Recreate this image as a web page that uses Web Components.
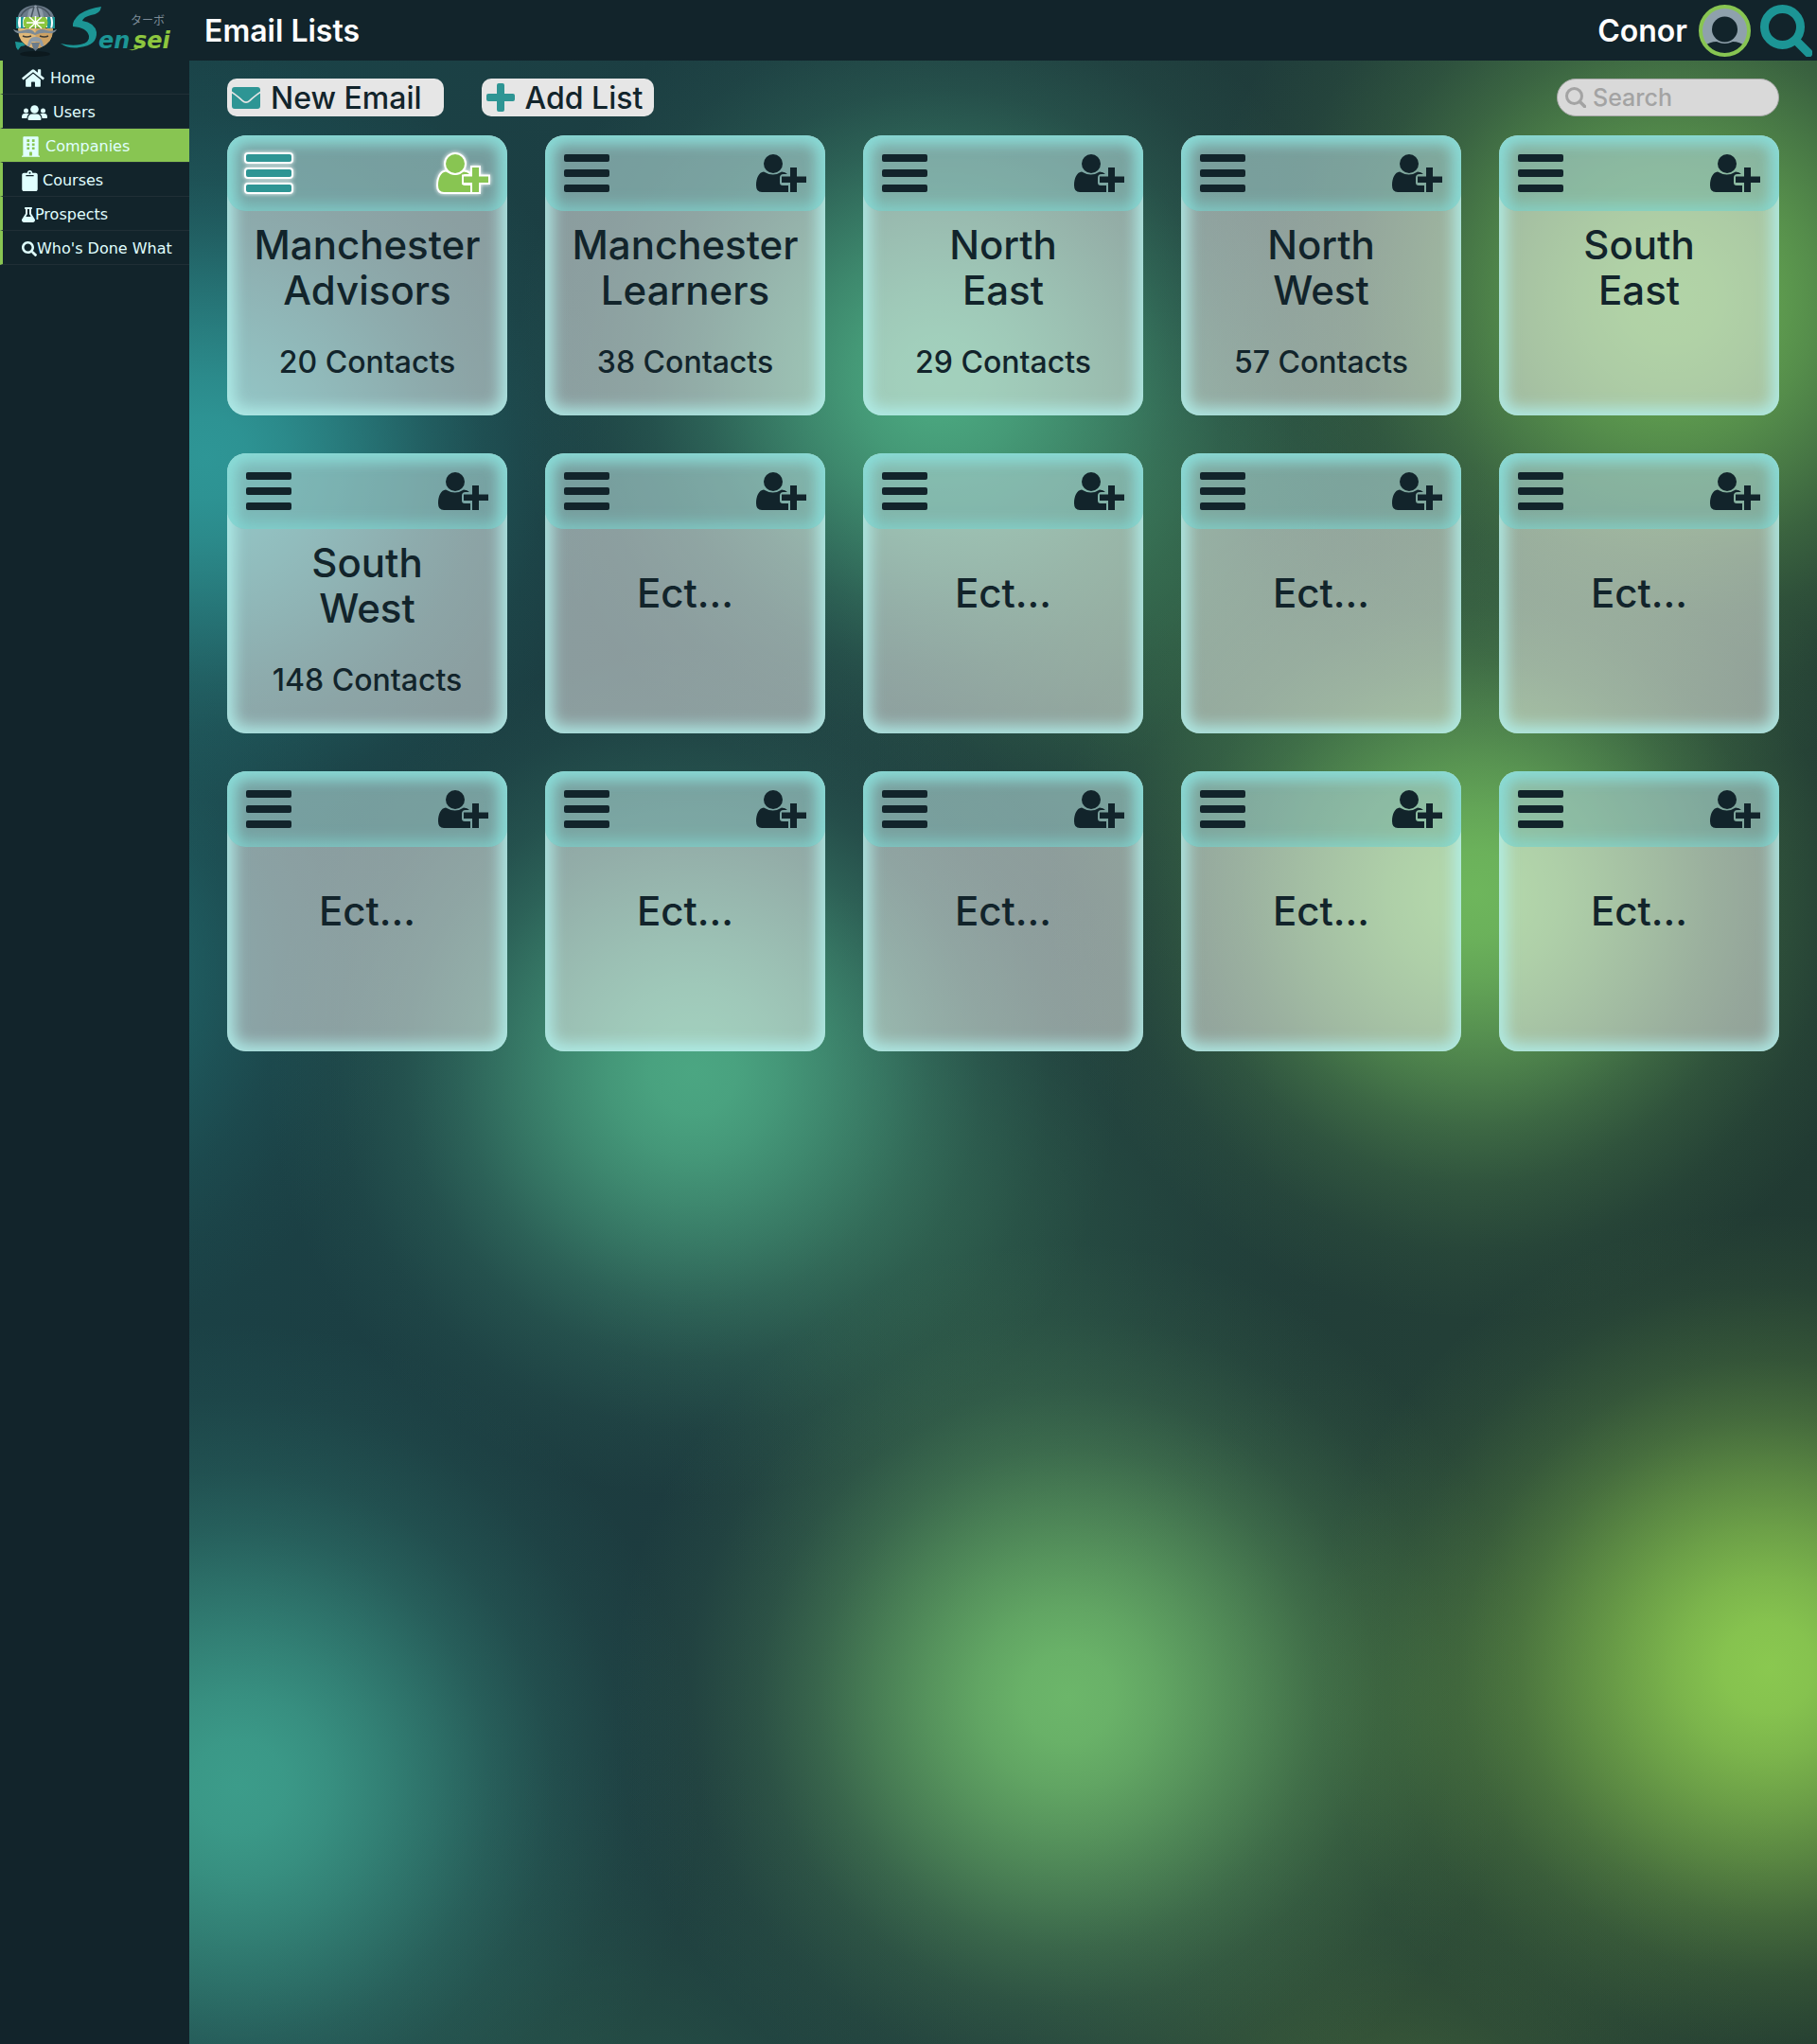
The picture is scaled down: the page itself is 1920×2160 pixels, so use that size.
<!DOCTYPE html>
<html lang="en">
<head>
<meta charset="utf-8">
<meta name="viewport" content="width=device-width, initial-scale=1">
<title>Email Lists</title>
<style>
  :root {
    --ink: #12242b;
    --teal: #2e9594;
    --green: #88c552;
    --display: Inter, "Open Sans", sans-serif;
    --ui: "DejaVu Sans", sans-serif;
  }
  html, body { margin: 0; min-height: 100%; background: var(--ink); }
</style>
</head>
<body>
<app-shell>
  <app-header slot="header" heading="Email Lists" user="Conor"></app-header>
  <side-nav slot="nav">
    <nav-item icon="home" gap="6">Home</nav-item>
    <nav-item icon="users" gap="6">Users</nav-item>
    <nav-item icon="building" gap="6" active>Companies</nav-item>
    <nav-item icon="clipboard" gap="5">Courses</nav-item>
    <nav-item icon="flask" gap="0">Prospects</nav-item>
    <nav-item icon="search" gap="0">Who's Done What</nav-item>
  </side-nav>
  <tool-bar>
    <tool-button icon="mail" wide>New Email</tool-button>
    <tool-button icon="plus">Add List</tool-button>
    <search-box slot="end" label="Search"></search-box>
  </tool-bar>
  <card-grid>
    <list-card contacts="20" highlighted>Manchester<br>Advisors</list-card>
    <list-card contacts="38">Manchester<br>Learners</list-card>
    <list-card contacts="29">North<br>East</list-card>
    <list-card contacts="57">North<br>West</list-card>
    <list-card>South<br>East</list-card>
    <list-card contacts="148">South<br>West</list-card>
    <list-card>Ect...</list-card>
    <list-card>Ect...</list-card>
    <list-card>Ect...</list-card>
    <list-card>Ect...</list-card>
    <list-card>Ect...</list-card>
    <list-card>Ect...</list-card>
    <list-card>Ect...</list-card>
    <list-card>Ect...</list-card>
    <list-card>Ect...</list-card>
  </card-grid>
</app-shell>

<script>
const svg = (w, h, box, body) =>
  `<svg width="${w}" height="${h}" viewBox="${box}" aria-hidden="true">${body}</svg>`;

const ICONS = {
  home: svg(24, 21, '0 0 576 512', '<path d="M280.37 148.26L96 300.11V464a16 16 0 0 0 16 16l112.06-.29a16 16 0 0 0 15.92-16V368a16 16 0 0 1 16-16h64a16 16 0 0 1 16 16v95.64a16 16 0 0 0 16 16.05L464 480a16 16 0 0 0 16-16V300L295.67 148.26a12.19 12.19 0 0 0-15.3 0zM571.6 251.47L488 182.56V44.05a12 12 0 0 0-12-12h-56a12 12 0 0 0-12 12v72.61L318.47 43a48 48 0 0 0-61 0L4.34 251.47a12 12 0 0 0-1.6 16.9l25.5 31A12 12 0 0 0 45.15 301l235.22-193.74a12.19 12.19 0 0 1 15.3 0L530.9 301a12 12 0 0 0 16.9-1.6l25.5-31a12 12 0 0 0-1.7-16.93z"/>'),
  users: svg(27, 16, '0 0 27 16', '<circle cx="13.500" cy="4.500" r="4.300"/><circle cx="4.500" cy="6" r="2.500"/><circle cx="22.500" cy="6" r="2.500"/><path d="M6.500 14.500c0-3 2-5 4.500-5h5c2.500 0 4.500 2 4.500 5 0 1-.5 1.500-1.500 1.500H8c-1 0-1.500-.5-1.500-1.500zM0 13c0-2.500 1-4 3-4h3c.8 0 1.300.2 1.800.6C6.300 10.500 5.600 12 5.500 14H1c-.6 0-1-.4-1-1zM27 13c0-2.500-1-4-3-4h-3c-.8 0-1.300.2-1.800.6 1.500.9 2.200 2.400 2.300 4.400H26c.6 0 1-.4 1-1z"/>'),
  building: svg(19, 22, '0 0 448 512', '<path fill-rule="evenodd" d="M436 480h-20V24c0-13-11-24-24-24H56C43 0 32 11 32 24v456H12c-7 0-12 5-12 12v20h448v-20c0-7-5-12-12-12zM128 76h64v60h-64zM256 76h64v60h-64zM128 172h64v60h-64zM256 172h64v60h-64zM128 268h64v60h-64zM256 268h64v60h-64zM190 480v-84c0-7 5-12 12-12h44c7 0 12 5 12 12v84z"/>'),
  clipboard: svg(17, 22, '0 0 384 512', '<path fill-rule="evenodd" d="M336 64h-80c0-35-29-64-64-64s-64 29-64 64H48C21 64 0 85 0 112v352c0 27 21 48 48 48h288c27 0 48-21 48-48V112c0-27-21-48-48-48zM192 40a24 24 0 1 1 0 48 24 24 0 0 1 0-48zM96 118h192v26H96z"/>'),
  flask: svg(14, 16, '0 0 448 512', '<path fill-rule="evenodd" d="M437.2 403.500L320 215V64h8c13.300 0 24-10.700 24-24V24c0-13.300-10.700-24-24-24H120c-13.300 0-24 10.700-24 24v16c0 13.300 10.700 24 24 24h8v151L10.800 403.500C-18.500 450.600 15.300 512 70.900 512h306.200c55.700 0 89.400-61.500 60.100-108.500zM137.900 320l48.200-77.600c3.700-5.200 5.800-11.600 5.800-18.400V64h64v160c0 6.900 2.200 13.200 5.800 18.400l48.200 77.600z"/>'),
  search: svg(16, 16, '0 0 512 512', '<path d="M505 442.700L405.300 343c-4.500-4.500-10.600-7-17-7H372c27.600-35.300 44-79.700 44-128C416 93.100 322.900 0 208 0S0 93.100 0 208s93.100 208 208 208c48.300 0 92.700-16.400 128-44v16.300c0 6.400 2.500 12.500 7 17l99.700 99.700c9.400 9.400 24.600 9.400 33.900 0l28.300-28.300c9.400-9.400 9.400-24.600.1-34zM208 336c-70.700 0-128-57.200-128-128 0-70.700 57.200-128 128-128 70.700 0 128 57.200 128 128 0 70.700-57.200 128-128 128z"/>'),
  mail: svg(30, 23, '0 0 30 23', '<path d="M3 0h24a3 3 0 0 1 3 3v1.500C25 8 21 11 18 14q-3 2.500-6 0C9 11 5 8 0 4.500V3a3 3 0 0 1 3-3z"/><path d="M0 6.500c4 2.500 8 6 10.500 8.500q4.500 4 9 0C22 12.500 26 9 30 6.500V20a3 3 0 0 1-3 3H3a3 3 0 0 1-3-3z"/>'),
  plus: svg(30, 30, '0 0 30 30', '<path d="M13 0h4a2 2 0 0 1 2 2v9h9a2 2 0 0 1 2 2v4a2 2 0 0 1-2 2h-9v9a2 2 0 0 1-2 2h-4a2 2 0 0 1-2-2v-9H2a2 2 0 0 1-2-2v-4a2 2 0 0 1 2-2h9V2a2 2 0 0 1 2-2z"/>'),
  lens: svg(22, 22, '0 0 22 22', '<g fill="none" stroke="currentColor"><circle cx="9.500" cy="9.500" r="8" stroke-width="3"/><path d="M15.500 15.500l5 5" stroke-width="3.500" stroke-linecap="round"/></g>'),
  bars: svg(48, 40, '0 0 48 40', '<rect width="48" height="8" rx="2"/><rect y="16" width="48" height="8" rx="2"/><rect y="32" width="48" height="8" rx="2"/>'),
  adduser: svg(53, 40, '0 0 53 40', '<path d="M6 40Q0 40 0 33C0 25 3 19 8 18.500q10 6 19 0 4 0 6 2.500H29q-4 0-4 4v5q0 3 3 3h6v7z"/><circle cx="18" cy="10" r="10"/><path d="M36 14h7v9.500h10v6.500H43v10h-7V30h-9v-6.500h9z"/>'),
  avatar: svg(55, 55, '0 0 55 55', '<circle cx="27.500" cy="27.500" r="25.500" fill="#8fa1ac"/><path fill="#12242b" d="M5 44C10 40.500 14 39 19 39q8.500 4 17 0c5 0 9 1.500 14 5L46 52 27.500 55 9 52z"/><circle cx="27.500" cy="26" r="14.500" fill="#8fa1ac"/><circle cx="27.500" cy="26" r="13.500" fill="#12242b"/><circle cx="27.500" cy="27.500" r="25.500" fill="none" stroke="#88c552" stroke-width="4"/>'),
  biglens: svg(55, 55, '0 0 55 55', '<g fill="none" stroke="currentColor"><circle cx="23.500" cy="23.500" r="19" stroke-width="9"/><path d="M38 38l13 13" stroke-width="9" stroke-linecap="round"/></g>'),
};

class Base extends HTMLElement {
  connectedCallback() {
    if (this.shadowRoot) return;
    const root = this.attachShadow({ mode: 'open' });
    root.innerHTML = `<style>
      :host { display: block; box-sizing: border-box; }
      *, ::before, ::after { box-sizing: border-box; }
      svg { display: block; fill: currentColor; flex: none; }
      button { border: 0; background: none; padding: 0; margin: 0; font: inherit; color: inherit; cursor: pointer; }
      ${this.styles()}</style>${this.markup()}`;
  }
  styles() { return ''; }
  markup() { return '<slot></slot>'; }
}

/* Soft light spots: x%, y%, radius in px, rgb */
const SPOTS = [
  [97, 81, 480, '138,200,80'],
  [54, 82.5, 480, '108,182,106'],
  [3, 87, 490, '60,156,138'],
  [79, 42, 450, '110,182,92'],
  [31, 51, 450, '75,166,130'],
  [91, 12, 500, '106,174,84'],
  [46, 16, 450, '75,168,128'],
  [1, 20, 430, '46,150,150'],
  [-10, 46, 400, '34,112,116'],
  [76, 84, 400, '46,78,54'],
  [74, 106, 420, '60,92,56'],
  [47, 60, 400, '40,80,68'],
  [60, 26, 420, '48,92,68'],
  [26, 106, 440, '38,80,70'],
];
const glow = ([x, y, r, c]) =>
  `radial-gradient(circle ${r}px at ${x}% ${y}%, rgb(${c}) 0, rgba(${c},.96) 10%, rgba(${c},.86) 20%, rgba(${c},.71) 31%, rgba(${c},.53) 43%, rgba(${c},.34) 55%, rgba(${c},.18) 68%, rgba(${c},.06) 84%, rgba(${c},0) 100%)`;

customElements.define('app-shell', class extends Base {
  styles() {
    return `
      :host { min-height: 100vh; display: flex; flex-direction: column; }
      .body { flex: 1; display: grid; grid-template-columns: 200px minmax(0, 1fr); }
      main { padding: 19px 40px 40px; display: flex; flex-direction: column; gap: 20px;
        background: ${SPOTS.map(glow).join(',')}, linear-gradient(100deg, #1a4348, #1d3b3e 40%, #233f37 75%, #203830); }`;
  }
  markup() {
    return `<slot name="header"></slot>
      <div class="body"><slot name="nav"></slot><main><slot></slot></main></div>`;
  }
});

customElements.define('sensei-logo', class extends Base {
  styles() {
    return `:host { width: 200px; flex: none; }
      .word { font: italic 700 24px "DejaVu Sans", sans-serif; }
      .kana { font: 12px "Noto Sans CJK JP", sans-serif; }`;
  }
  markup() {
    return `<svg width="200" height="64" viewBox="0 0 200 64" role="img" aria-label="Sensei">
      <ellipse cx="37" cy="57" rx="16" ry="3" fill="#0c191e"/>
      <path d="M19 18C20 10 28 6 37.500 5.500 47 6 55 10 57 18z" fill="#6b7b8a"/>
      <path d="M29 18q0-10 8.500-12.500Q46 8 46 18z" fill="#8d9ba8"/>
      <path d="M22 17q4-8 14-10M53 17q-4-8-14-10M33 18l3-11M42 18l-3-11" stroke="#46545f" stroke-width="1.500" fill="none"/>
      <path d="M19 30h37l-1 8q-3 10-17.500 14Q23 48 20 38z" fill="#e0b878"/>
      <path d="M37.500 30H56l-1 8q-3 10-17.500 14z" fill="#cda264"/>
      <path d="M17 18h41v12q-20-3-41 0z" fill="#fff"/>
      <path d="M17 18h3q-2 6 0 12h-3zM22 18h3q-2 6 0 12h-3zM50 18h3q2 6 0 12h-3zM55 18h3v12h-3q2-6 0-12z" fill="#1c9595"/>
      <path d="M27 18h21q5 6 0 12-10-1-21 0-5-6 0-12z" fill="#8dc63f"/>
      <path d="M37.500 17v13M28 24h19M31 18l13 12M44 18L31 30" stroke="#fff" stroke-width="1.500"/>
      <path d="M14 31q5 3 11 1 8-3 12 3 4-6 12-3 6 2 11-1-2 5-9 4-8-1-14 2-6-3-14-2-7 1-9-4z" fill="#7c8b97"/>
      <path d="M24 38q4 2 9 0M42 38q5 2 9 0" stroke="#3b3a35" stroke-width="1.500" fill="none"/>
      <path d="M37.500 39q-5 0-7 4l-2 6h3l2-5h8l2 5h3l-2-6q-2-4-7-4z" fill="#8d9ba8"/>
      <path d="M33 45h9l-2 6-2.500 3-2.500-3z" fill="#6b7b8a"/>
      <path d="M16 44l8 1 3 3-5 1-3 4-2-3z" fill="#1c9595"/>
      <path d="M107 7q-1 8-11 9-8 2-9 6 13 2 15 12 1 14-18 16-11 2-20-4 12 3 21 1 10-2 9-9-2-9-17-10-1-6 7-13Q93 9 107 7z" fill="#1c9595"/>
      <path d="M134 52q6 2 12-3l2 1q-6 5-14 2z" fill="#8dc63f"/>
      <text class="word" x="104" y="51" fill="#1c9595">en</text>
      <text class="word" x="141" y="51" fill="#8dc63f">sei</text>
      <text class="kana" x="138" y="26" fill="#7c8b97">ターボ</text>
    </svg>`;
  }
});

customElements.define('app-header', class extends Base {
  styles() {
    return `
      header { display: flex; align-items: center; height: 64px; padding-right: 5px; background: var(--ink); color: #fff; font: 600 32px/36px var(--display); }
      h1 { margin: 0 auto 0 16px; font: inherit; }
      h1, .user span { padding-top: 2px; }
      .user { display: flex; align-items: center; gap: 12px; margin-right: 10px; }
      .find { color: #1c9595; }`;
  }
  markup() {
    return `<header><sensei-logo></sensei-logo>
      <h1>${this.getAttribute('heading')}</h1>
      <button class="user" type="button"><span>${this.getAttribute('user')}</span>${ICONS.avatar}</button>
      <button class="find" type="button" aria-label="Find">${ICONS.biglens}</button></header>`;
  }
});

customElements.define('side-nav', class extends Base {
  styles() { return `:host { background: var(--ink); }`; }
  markup() { return '<nav><slot></slot></nav>'; }
});

customElements.define('nav-item', class extends Base {
  styles() {
    return `
      a { display: flex; align-items: center; height: 36px; padding: 2px 0 0 20px; gap: ${this.getAttribute('gap')}px;
        border-left: 3px solid var(--green); border-bottom: 1px solid #202f36;
        font: 16px/20px var(--ui); color: #e0ffff; text-decoration: none; white-space: nowrap; }
      :host([active]) a { background: var(--green); }`;
  }
  markup() { return `<a href="#">${ICONS[this.getAttribute('icon')]}<span><slot></slot></span></a>`; }
});

customElements.define('tool-bar', class extends Base {
  styles() {
    return `:host { display: flex; justify-content: space-between; }
      div { display: flex; gap: 40px; }`;
  }
  markup() { return '<div><slot></slot></div><slot name="end"></slot>'; }
});

customElements.define('tool-button', class extends Base {
  styles() {
    return `
      button { display: flex; align-items: center; gap: 11px; height: 40px; padding: 0 12px 0 5px; border-radius: 10px;
        background: #e6e6e6; color: var(--ink); font: 500 32px/38px var(--display); white-space: nowrap; }
      span { padding-top: 2px; }
      :host([wide]) button { padding-right: 23px; }
      svg { color: var(--teal); }`;
  }
  markup() { return `<button type="button">${ICONS[this.getAttribute('icon')]}<span><slot></slot></span></button>`; }
});

customElements.define('search-box', class extends Base {
  styles() {
    return `
      label { display: flex; align-items: center; gap: 7px; width: 235px; height: 40px; padding: 0 16px 0 8px;
        border: 1px solid #a9a9a9; border-radius: 20px; background: #d9d9d9; color: #a3a3a3; }
      input { flex: 1; min-width: 0; border: 0; outline: 0; padding: 0; background: none; color: var(--ink); font: 500 25px/30px var(--display); }
      input::placeholder { color: #a3a3a3; opacity: 1; }`;
  }
  markup() {
    const t = this.getAttribute('label');
    return `<label>${ICONS.lens}<input type="search" aria-label="${t}" placeholder="${t}"></label>`;
  }
});

customElements.define('card-grid', class extends Base {
  styles() { return `:host { display: grid; grid-template-columns: repeat(5, minmax(0, 1fr)); gap: 40px; }`; }
});

customElements.define('list-card', class extends Base {
  styles() {
    return `
      article { aspect-ratio: 1; border-radius: 20px; overflow: hidden; color: var(--ink); text-align: center;
        background: rgba(250, 250, 249, .5); box-shadow: inset 0 0 15px 8px rgba(178, 240, 236, .85); font: 500 42px/48px var(--display); }
      header { display: flex; justify-content: space-between; height: 80px; padding: 20px; border-radius: 20px;
        background: rgba(72, 160, 156, .3); box-shadow: inset 0 0 15px 6px rgba(132, 226, 222, .6); }
      h2 { display: flex; align-items: center; justify-content: center; min-height: 112px; margin: 4px 0 16px; font: inherit; }
      p { margin: 0; font-size: 32px; line-height: 56px; }
      :host(:not([contacts])) h2 { padding-top: var(--drop, 0px); }
      :host([highlighted]) svg { overflow: visible; stroke: #fff; stroke-width: 4px; paint-order: stroke; filter: drop-shadow(0 0 2px #fff); }
      :host([highlighted]) .menu { color: var(--teal); }
      :host([highlighted]) .add { color: var(--green); }`;
  }
  markup() {
    const n = this.getAttribute('contacts');
    /* One-line names sit slightly below the middle of the name area */
    if (!this.querySelector('br')) this.style.setProperty('--drop', '16px');
    return `<article><header>
        <button class="menu" type="button" aria-label="List menu">${ICONS.bars}</button>
        <button class="add" type="button" aria-label="Add contact">${ICONS.adduser}</button>
      </header><h2><span><slot></slot></span></h2>${n ? `<p>${n} Contacts</p>` : ''}</article>`;
  }
});
</script>
</body>
</html>
